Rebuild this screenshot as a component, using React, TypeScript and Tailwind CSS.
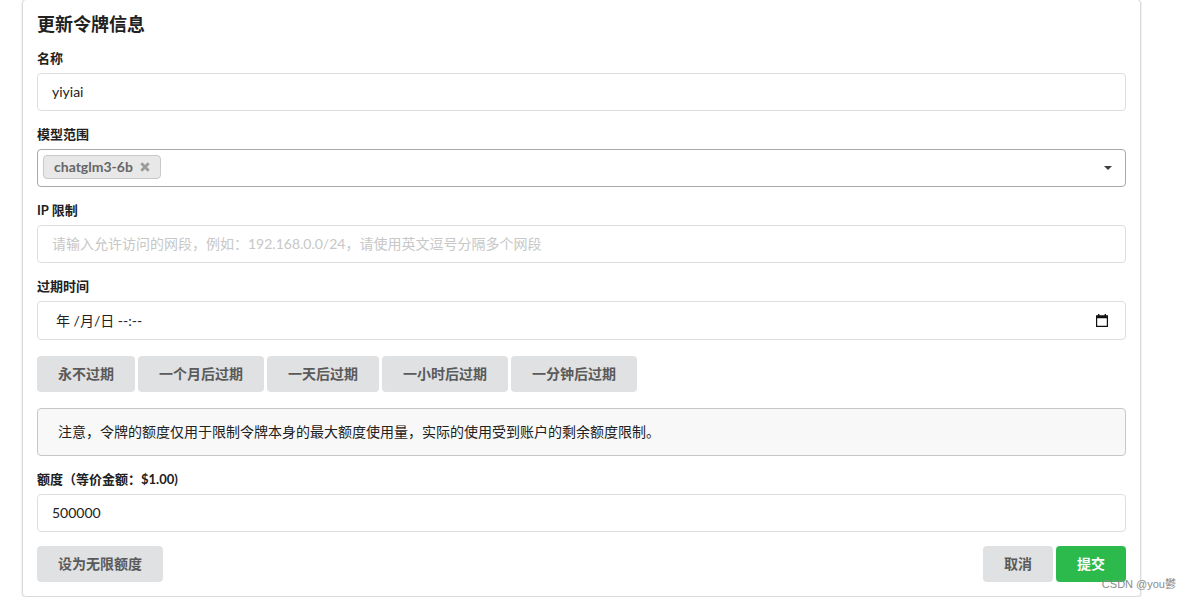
import React from 'react';

const inputClass =
  'block w-full h-[38px] px-3.5 pb-0.5 rounded-sm border border-[#dedede] bg-white text-sm text-[#212121] placeholder:text-[#c7c7c7] outline-none';

const greyButton =
  'h-9 px-[21px] rounded-sm bg-[#e0e1e2] text-sm font-bold text-[#5a5a5a] whitespace-nowrap cursor-pointer';

const expiryOptions = ['永不过期', '一个月后过期', '一天后过期', '一小时后过期', '一分钟后过期'];

function Field({ id, label, children }: { id: string; label: string; children: React.ReactNode }) {
  return (
    <div className="mb-3.5">
      <label htmlFor={id} className="block mb-1.5 text-[13px] leading-[18px] font-bold">
        {label}
      </label>
      {children}
    </div>
  );
}

function ModelSelect() {
  return (
    <div className="flex items-center h-[38px] pl-[5px] pr-[13px] rounded-sm border border-[#a9a9a9] bg-white">
      <span className="flex items-center gap-[7px] h-6 -mt-0.5 px-2.5 rounded-sm border border-[#c9c9c9] bg-[#e8e8e8] text-sm font-bold text-[#666666]">
        chatglm3-6b
        <button type="button" aria-label="移除 chatglm3-6b" className="cursor-pointer">
          <svg width="10" height="10" viewBox="0 0 10 10" className="block" fill="none">
            <path d="M1.3 1.3 8.7 8.7M8.7 1.3 1.3 8.7" stroke="#9b9b9b" strokeWidth="2.8" />
          </svg>
        </button>
      </span>
      <input id="models" type="text" className="flex-1 min-w-0 h-full bg-transparent text-sm outline-none" />
      <button type="button" aria-label="展开" className="cursor-pointer">
        <svg width="8" height="4" viewBox="0 0 8 4" className="block">
          <path d="M0 0h8L4 4z" fill="#3f3f3f" />
        </svg>
      </button>
    </div>
  );
}

function ExpiryInput() {
  return (
    <div className="flex items-center h-[39px] pl-[18px] pr-[17px] pb-px rounded-sm border border-[#dedede] bg-white">
      <input
        id="expiry"
        type="text"
        defaultValue="年 /月/日 --:--"
        className="flex-1 min-w-0 h-full text-sm outline-none"
      />
      <button type="button" aria-label="选择日期" className="cursor-pointer">
        <svg width="12" height="13" viewBox="0 0 12 13" className="block">
          <path d="M2 0h1.4v1.2h5.2V0H10v1.2h2V13H0V1.2h2zM1.2 4.2v7.6h9.6V4.2z" fill="#111111" fillRule="evenodd" />
        </svg>
      </button>
    </div>
  );
}

export default function App() {
  return (
    <main className="relative pl-[22px] pr-[50px] bg-white font-[Lato,'Noto_Sans_CJK_SC',sans-serif] text-[#212121]">
      <div className="-mt-px p-3.5 rounded-sm border border-[#d9dadb] shadow-[0_1px_2px_#d4d4d5]">
        <h1 className="mb-3.5 text-lg leading-[21px] font-bold">更新令牌信息</h1>

        <form onSubmit={(e) => e.preventDefault()}>
          <Field id="name" label="名称">
            <input id="name" type="text" defaultValue="yiyiai" className={inputClass} />
          </Field>
          <Field id="models" label="模型范围">
            <ModelSelect />
          </Field>
          <Field id="subnet" label="IP 限制">
            <input
              id="subnet"
              type="text"
              placeholder="请输入允许访问的网段，例如：192.168.0.0/24，请使用英文逗号分隔多个网段"
              className={inputClass}
            />
          </Field>
          <Field id="expiry" label="过期时间">
            <ExpiryInput />
          </Field>

          {/* Expiry shortcuts */}
          <div className="flex flex-wrap gap-[3px] my-4">
            {expiryOptions.map((option) => (
              <button key={option} type="button" className={greyButton}>
                {option}
              </button>
            ))}
          </div>

          {/* Notice */}
          <div className="mb-3.5 px-5 py-3.5 rounded-sm border border-[#c6c7c8] bg-[#f8f8f8] text-sm leading-[18px]">
            <p>注意，令牌的额度仅用于限制令牌本身的最大额度使用量，实际的使用受到账户的剩余额度限制。</p>
          </div>

          <Field id="quota" label="额度（等价金额：$1.00)">
            <input id="quota" type="text" defaultValue="500000" className={inputClass} />
          </Field>

          {/* Actions */}
          <div className="flex justify-between">
            <button type="button" className={greyButton}>
              设为无限额度
            </button>
            <div className="flex gap-[3px]">
              <button type="button" className={greyButton}>
                取消
              </button>
              <button
                type="submit"
                className="h-9 px-[21px] rounded-sm bg-[#2bba4b] text-sm font-bold text-white whitespace-nowrap cursor-pointer"
              >
                提交
              </button>
            </div>
          </div>
        </form>
      </div>

      {/* Watermark */}
      <span className="absolute right-[15px] bottom-[5px] font-['Liberation_Sans','Noto_Sans_CJK_SC',sans-serif] text-[11px] leading-4 text-[#8c8c8c] pointer-events-none">
        CSDN @you鬱
      </span>
    </main>
  );
}
